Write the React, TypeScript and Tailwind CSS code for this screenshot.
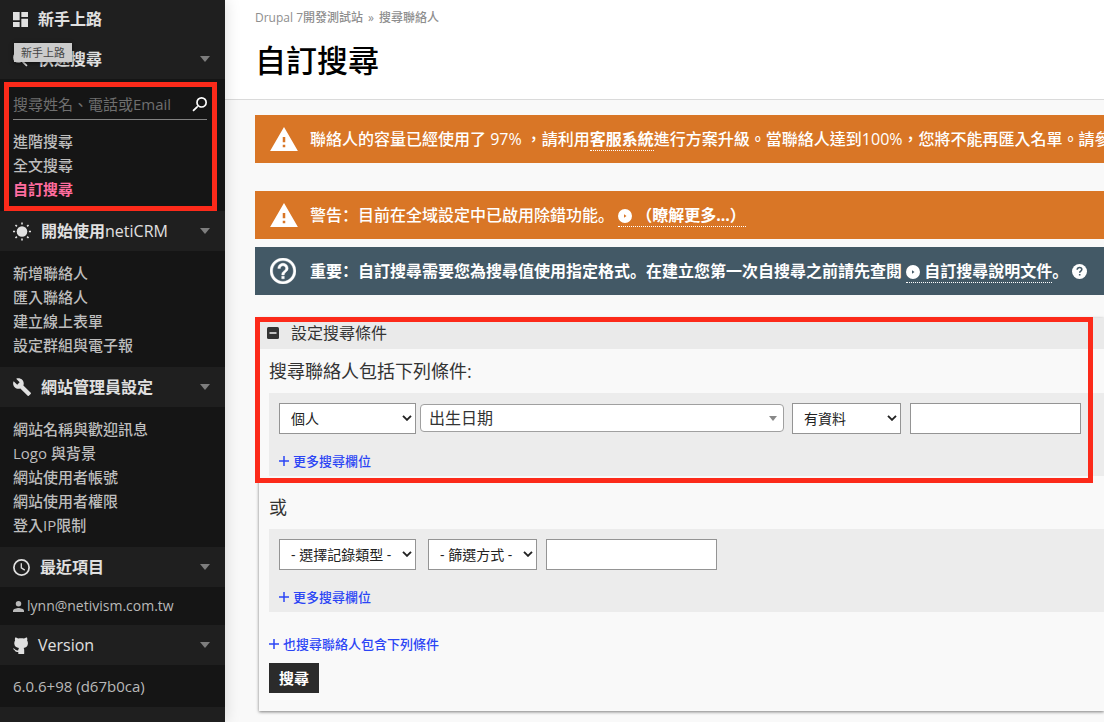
import React from "react";

type IconProps = { className?: string };

const DashboardIcon = ({ className = "" }: IconProps) => (
  <svg viewBox="3 3 18 18" className={`size-[15px] shrink-0 ${className}`} fill="currentColor" aria-hidden="true">
    <path d="M3 13h8V3H3v10zm0 8h8v-6H3v6zm10 0h8V11h-8v10zm0-18v6h8V3h-8z" />
  </svg>
);

const SearchIcon = ({ className = "" }: IconProps) => (
  <svg viewBox="3 3 18 18" className={`size-[15px] shrink-0 ${className}`} fill="currentColor" aria-hidden="true">
    <path d="M15.5 14h-.79l-.28-.27A6.47 6.47 0 0 0 16 9.5 6.5 6.5 0 1 0 9.5 16c1.61 0 3.09-.59 4.23-1.57l.27.28v.79l5 4.99L20.49 19l-4.99-5zm-6 0C7.01 14 5 11.99 5 9.5S7.01 5 9.5 5 14 7.01 14 9.5 11.99 14 9.5 14z" />
  </svg>
);

const SunIcon = () => (
  <svg viewBox="0 0 19 19" className="h-[19px] w-[18px] shrink-0" fill="currentColor" aria-hidden="true">
    <circle cx="9.5" cy="9.5" r="5.6" />
    <g stroke="currentColor" strokeWidth="1.700">
      <path d="M9.500 0v2M9.500 17v2M0 9.500h2.200M16.800 9.500h2.200M2.600 2.600l1.500 1.500M14.900 14.900l1.500 1.500M2.600 16.400l1.500-1.500M14.900 4.100l1.500-1.500" />
    </g>
  </svg>
);

const WrenchIcon = () => (
  <svg viewBox="0.8 1.2 22.200 21.200" className="h-[18px] w-[18px] shrink-0" fill="currentColor" aria-hidden="true">
    <path d="M22.7 19l-9.1-9.1c.9-2.300.4-5-1.500-6.900-2-2-5-2.400-7.400-1.300L9 6 6 9 1.600 4.700C.4 7.100.9 10.100 2.900 12.100c1.900 1.900 4.600 2.400 6.900 1.500l9.100 9.100c.4.4 1 .4 1.400 0l2.300-2.300c.5-.4.5-1.100.1-1.400z" />
  </svg>
);

const ClockIcon = () => (
  <svg viewBox="0 0 17 17" className="size-[17px] shrink-0" fill="none" stroke="currentColor" aria-hidden="true">
    <circle cx="8.5" cy="8.5" r="7.6" strokeWidth="1.700" />
    <path d="M8.300 4.200v4.700l3.500 2.200" strokeWidth="1.300" />
  </svg>
);

const OctocatIcon = () => (
  <svg viewBox="0 0 15 17" className="h-[17px] w-[15px] shrink-0" fill="currentColor" aria-hidden="true">
    <path d="M2.200.5C3.300.4 4.500 1.100 5.300 1.600c1.900-.4 3.800-.4 5.700 0C11.800 1.100 12.900.4 14 .5c.4 1.100.4 2.200.1 3.100.7.9.9 2 .8 3.200-.2 2.700-1.900 3.800-4.300 4.200.4.500.6 1.100.6 1.800v3.600c0 .4-.2.600-.6.600H5.900c-.4 0-.6-.2-.6-.6v-1.500c-2.900.5-3.300-1.100-3.900-1.900C1.100 12.500.7 12.200.1 11.900c-.2-.3.1-.5.5-.5 1.300 0 1.700 1.100 2.300 1.700.7.600 1.600.5 2.400.2 0-.9.200-1.700.7-2.300C3.300 10.600 1.500 9.500 1.300 6.800c-.1-1.200.1-2.300.8-3.200-.3-.9-.3-2 .1-3.100z" />
  </svg>
);

const PersonIcon = () => (
  <svg viewBox="4 4 16 16" className="size-[11px] shrink-0" fill="currentColor" aria-hidden="true">
    <circle cx="12" cy="8" r="4" />
    <path d="M12 14c-2.670 0-8 1.340-8 4v2h16v-2c0-2.660-5.330-4-8-4z" />
  </svg>
);

const WarningIcon = () => (
  <svg viewBox="1 2 22 19" className="h-6 w-7" fill="currentColor" aria-hidden="true">
    <path d="M1 21h22L12 2 1 21zm12-3h-2v-2h2v2zm0-4h-2v-4h2v4z" />
  </svg>
);

const HelpIcon = () => (
  <svg viewBox="2 2 20 20" className="size-[26px]" fill="currentColor" stroke="currentColor" strokeWidth="0.300" aria-hidden="true">
    <path d="M11 18h2v-2h-2v2zm1-16C6.480 2 2 6.480 2 12s4.480 10 10 10 10-4.480 10-10S17.520 2 12 2zm0 18c-4.410 0-8-3.590-8-8s3.590-8 8-8 8 3.590 8 8-3.590 8-8 8zm0-14c-2.210 0-4 1.790-4 4h2c0-1.100.9-2 2-2s2 .9 2 2c0 2-3 1.750-3 5h2c0-2.250 3-2.500 3-5 0-2.210-1.790-4-4-4z" />
  </svg>
);

const PlayDot = () => (
  <svg viewBox="0 0 14 14" className="mr-1 inline-block size-[14px] align-[-2px]" aria-hidden="true">
    <path fill="currentColor" fillRule="evenodd" d="M7 0a7 7 0 1 1 0 14A7 7 0 0 1 7 0zM6 5.200v3.600L8.500 7z" />
  </svg>
);

const Chevron = () => (
  <svg viewBox="0 0 10 6" className="pointer-events-none absolute right-1 top-3 h-[6px] w-[10px]" fill="none" stroke="#222" strokeWidth="1.900" aria-hidden="true">
    <path d="M1 .8l4 4 4-4" />
  </svg>
);

const Plus = () => (
  <svg viewBox="0 0 10 10" className="mb-px size-[10px]" stroke="currentColor" strokeWidth="1.500" aria-hidden="true">
    <path d="M5 0v10M0 5h10" />
  </svg>
);

function SectionHeader({ icon, children }: { icon: React.ReactNode; children: React.ReactNode }) {
  return (
    <h2>
      <button type="button" className="flex h-10 w-full items-center gap-[10px] bg-[#1f1f1f] pl-[13px] pr-[15px] text-left text-base font-bold text-[#e0e0e0]">
        {icon}
        <span className="flex-1">{children}</span>
        <svg viewBox="0 0 10 6" className="h-[6px] w-[10px]" fill="#7d7d7d" aria-hidden="true">
          <path d="M0 0h10L5 6z" />
        </svg>
      </button>
    </h2>
  );
}

function LinkList({ items, active }: { items: string[]; active?: string }) {
  return (
    <ul className="text-[15px] font-medium leading-6">
      {items.map((t) => (
        <li key={t}>
          <a href="#" className={t === active ? "font-bold text-[#ff6d9f]" : "text-[#bdbdbd]"}>{t}</a>
        </li>
      ))}
    </ul>
  );
}

function Sidebar() {
  return (
    <aside className="relative z-10 flex w-[225px] shrink-0 flex-col bg-[#1f1f1f] shadow-[0_0_15px_rgba(0,0,0,0.15)]">
      <a href="#" className="mb-px flex h-[38px] items-center gap-[10px] pl-[13px] text-base font-bold text-[#e0e0e0]">
        <DashboardIcon />
        新手上路
      </a>
      <div className="relative">
        <SectionHeader icon={<SearchIcon />}>快速搜尋</SectionHeader>
        <span role="tooltip" className="absolute left-[14px] top-1 bg-[#cbcbcb] px-[7px] text-[11px] leading-[19px] text-[#444] shadow-[0_1px_4px_rgba(0,0,0,0.6)]">
          新手上路
        </span>
      </div>
      <div className="relative bg-[#151515] px-[13px] py-[10px]">
        <form className="mb-[9px] mr-[5px] flex h-[31px] items-center border-b border-[#828282]">
          <input
            type="text"
            aria-label="搜尋姓名、電話或Email"
            placeholder="搜尋姓名、電話或Email"
            className="min-w-0 flex-1 bg-transparent text-[15px] text-white outline-none placeholder:text-[#6f6f6f]"
          />
          <button type="button" aria-label="搜尋" className="text-white">
            <SearchIcon className="-scale-x-100" />
          </button>
        </form>
        <LinkList items={["進階搜尋", "全文搜尋", "自訂搜尋"]} active="自訂搜尋" />
        <div className="pointer-events-none absolute bottom-0 left-1 right-2 top-[3px] border-[5px] border-[#fc2a1a]" />
      </div>
      <SectionHeader icon={<SunIcon />}>開始使用<span className="font-medium">netiCRM</span></SectionHeader>
      <div className="bg-[#151515] px-[13px] py-[10px]">
        <LinkList items={["新增聯絡人", "匯入聯絡人", "建立線上表單", "設定群組與電子報"]} />
      </div>
      <SectionHeader icon={<WrenchIcon />}>網站管理員設定</SectionHeader>
      <div className="bg-[#151515] px-[13px] py-[10px]">
        <LinkList items={["網站名稱與歡迎訊息", "Logo 與背景", "網站使用者帳號", "網站使用者權限", "登入IP限制"]} />
      </div>
      <SectionHeader icon={<ClockIcon />}>最近項目</SectionHeader>
      <div className="bg-[#151515] px-[13px] py-[7px]">
        <a href="#" className="flex items-center gap-[3px] text-sm leading-6 text-[#b9b9b9]">
          <PersonIcon />
          lynn@netivism.com.tw
        </a>
      </div>
      <SectionHeader icon={<OctocatIcon />}><span className="font-medium">Version</span></SectionHeader>
      <p className="bg-[#151515] px-[13px] py-[9px] text-[15px] leading-6 text-[#b9b9b9]">6.0.6+98 (d67b0ca)</p>
    </aside>
  );
}

function Banner({ tone, icon, children }: { tone: string; icon: React.ReactNode; children: React.ReactNode }) {
  return (
    <div className={`flex h-12 items-center overflow-hidden whitespace-nowrap pl-[15px] text-base text-white ${tone}`}>
      <div className="w-10 shrink-0">{icon}</div>
      <p className="leading-6">{children}</p>
    </div>
  );
}

const inlineLink = "inline-block border-b border-dotted border-white font-bold leading-[22px]";
const scFont = "font-['Open_Sans','Noto_Sans_CJK_SC',sans-serif]";

function Select({ label, options, width }: { label: string; options: string[]; width: string }) {
  return (
    <div className={`relative shrink-0 ${width}`}>
      <select aria-label={label} className="h-[31px] w-full appearance-none border border-[#949494] bg-white pl-[11px] text-sm text-[#222]">
        {options.map((o) => (
          <option key={o}>{o}</option>
        ))}
      </select>
      <Chevron />
    </div>
  );
}

const ValueInput = ({ label }: { label: string }) => (
  <input type="text" aria-label={label} className="h-[31px] w-[171px] shrink-0 border border-[#949494] bg-white px-2 text-sm" />
);

const AddLink = ({ children }: { children: React.ReactNode }) => (
  <a href="#" className="inline-flex items-center gap-1 text-[13px] font-medium leading-5 text-[#2b45f5]">
    <Plus />
    {children}
  </a>
);

function SearchPanel() {
  return (
    <section className="relative ml-1 mt-[23px] bg-[#f9f9f9] text-[#333] shadow-[0_1px_3px_rgba(0,0,0,0.5)]">
      <h2 className="bg-[#eaeaea]">
        <button type="button" className="flex h-[31px] items-center gap-3 pb-[2px] pl-2 text-base">
          <svg viewBox="0 0 12 12" className="size-3" aria-hidden="true">
            <rect width="12" height="12" rx="1.500" fill="#333" />
            <path d="M2.500 6h7" stroke="#ddd" strokeWidth="1.700" />
          </svg>
          設定搜尋條件
        </button>
      </h2>
      <div className="pb-[18px] pl-[10px]">
        <h3 className="pb-[8px] pt-[8px] text-lg leading-7">搜尋聯絡人包括下列條件:</h3>
        <div className="h-[83px] bg-[#ececec] p-[10px]">
          <div className="flex items-start">
            <Select label="記錄類型" options={["個人"]} width="w-[137px]" />
            <div className="relative ml-1 mt-px w-[364px] shrink-0">
              <select aria-label="欄位" className="block h-7 w-full appearance-none rounded border border-[#a0a0a0] bg-white pl-2 text-base text-[#333]">
                <option>出生日期</option>
              </select>
              <svg viewBox="0 0 8 5" className="pointer-events-none absolute right-[7px] top-3 h-[5px] w-2" fill="#888" aria-hidden="true">
                <path d="M0 0h8L4 5z" />
              </svg>
            </div>
            <div className="ml-2">
              <Select label="篩選方式" options={["有資料"]} width="w-[109px]" />
            </div>
            <div className="ml-[9px]">
              <ValueInput label="搜尋值" />
            </div>
          </div>
          <div className="mt-[17px] flex">
            <AddLink>更多搜尋欄位</AddLink>
          </div>
        </div>
        <h3 className="pb-[8px] pt-[17px] text-lg leading-7">或</h3>
        <div className="h-[83px] bg-[#ececec] p-[10px]">
          <div className="flex items-start">
            <Select label="第二組記錄類型" options={["- 選擇記錄類型 -"]} width="w-[137px]" />
            <div className="ml-3">
              <Select label="第二組篩選方式" options={["- 篩選方式 -"]} width="w-[109px]" />
            </div>
            <div className="ml-[9px]">
              <ValueInput label="第二組搜尋值" />
            </div>
          </div>
          <div className="mt-[17px] flex">
            <AddLink>更多搜尋欄位</AddLink>
          </div>
        </div>
        <div className="mt-[22px] flex">
          <AddLink>也搜尋聯絡人包含下列條件</AddLink>
        </div>
        <button type="submit" className="mt-[9px] block h-[30px] bg-[#2b2b2b] px-[10px] text-[15px] font-bold text-white">
          搜尋
        </button>
      </div>
      <div className="pointer-events-none absolute -left-1 -top-px right-[11px] h-[166px] border-[5px] border-[#fc2a1a]" />
    </section>
  );
}

export default function App() {
  return (
    <div lang="zh-TW" className="flex min-h-screen overflow-hidden bg-[#f9f9f9] font-['Open_Sans','Noto_Sans_CJK_TC',sans-serif]">
      <Sidebar />
      <main className="min-w-0 flex-1">
        <header className="h-[100px] border-b border-[#dadada] bg-white pl-[30px] pt-2">
          <nav className="flex gap-[5px] text-xs leading-5 text-[#8e8e8e]">
            <a href="#">Drupal 7<span className="font-medium">開發測試站</span></a>
            <span>»</span>
            <a href="#" className="font-medium">搜尋聯絡人</a>
          </nav>
          <h1 className="mt-[11px] text-[31px] font-medium leading-[42px] text-black">自訂搜尋</h1>
        </header>
        <div className="pl-[30px] pt-[15px]">
          <Banner tone="bg-[#d97626]" icon={<WarningIcon />}>
            <span className="font-medium">
              聯絡人的容量已經使用了 97% ，請利用<a href="#" className={inlineLink}>客服系統</a>進行方案升級。當聯絡人達到100%，您將不能再匯入名單。請參
            </span>
          </Banner>
          <div className={`mt-7 flex flex-col gap-2 ${scFont}`}>
            <Banner tone="bg-[#d97626]" icon={<WarningIcon />}>
              <span lang="zh-CN" className="font-medium">
                警告：目前在全域設定中已啟用除錯功能。{" "}
                <a href="#" className={inlineLink}><PlayDot />（瞭解更多...）</a>
              </span>
            </Banner>
            <Banner tone="bg-[#435966]" icon={<HelpIcon />}>
              <span lang="zh-CN" className="font-bold">
                重要：自訂搜尋需要您為搜尋值使用指定格式。在建立您第一次自搜尋之前請先查閱{" "}
                <a href="#" className={inlineLink}><PlayDot />自訂搜尋說明文件</a>。{" "}
                <button type="button" aria-label="說明" className="inline-block align-[-2px]">
                  <svg viewBox="0 0 15 15" className="size-[15px]" aria-hidden="true">
                    <circle cx="7.5" cy="7.5" r="7.5" fill="#fff" />
                    <path d="M5.200 5.700c0-1.400 1-2.200 2.300-2.200s2.300.8 2.300 2c0 1.500-2.100 1.600-2.100 3.200M7.700 9.900v1.700" fill="none" stroke="#435966" strokeWidth="1.600" />
                  </svg>
                </button>
              </span>
            </Banner>
          </div>
          <SearchPanel />
        </div>
      </main>
    </div>
  );
}
